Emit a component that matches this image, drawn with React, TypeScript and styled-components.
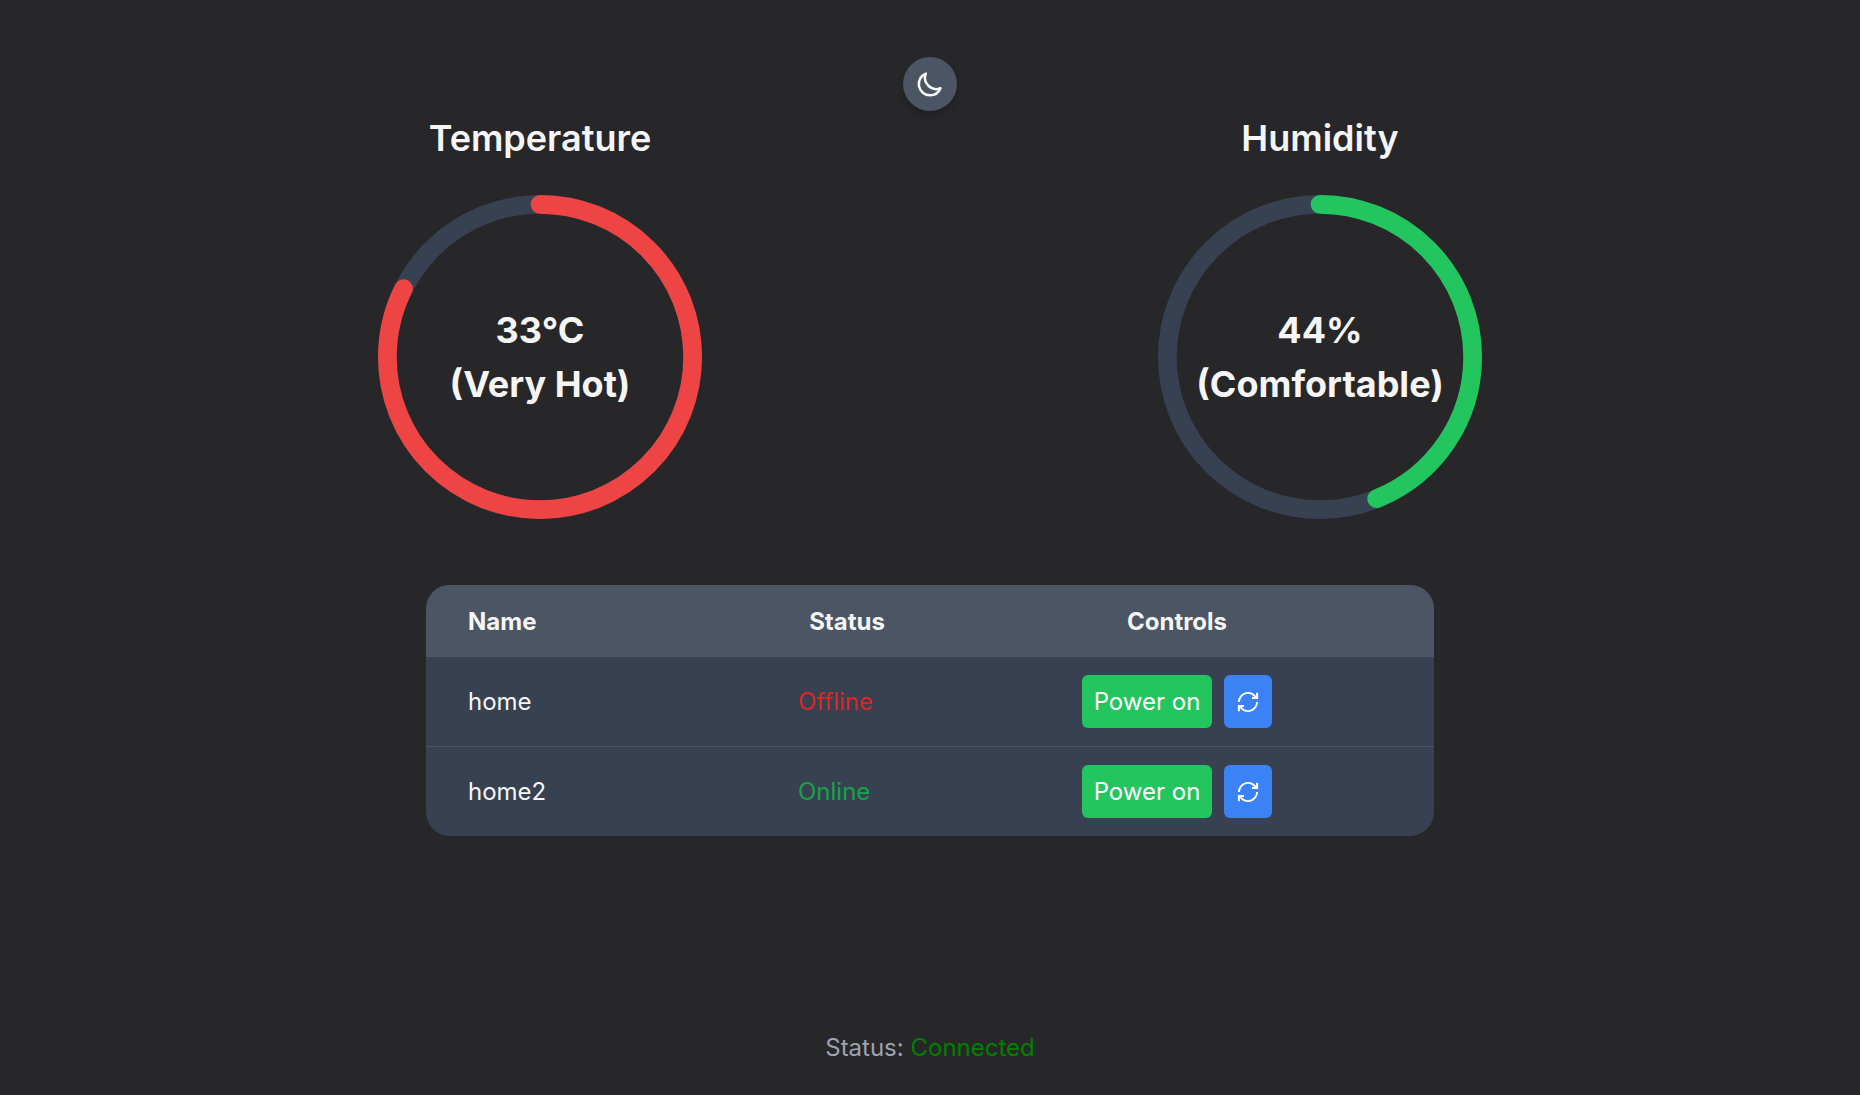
import React, { useState } from "react";
import styled, { createGlobalStyle } from "styled-components";
import { IoSunnyOutline } from "react-icons/io5";

const GlobalStyle = createGlobalStyle<{ $dark: boolean }>`
  *, *::before, *::after { box-sizing: border-box; }
  body {
    margin: 0;
    background: ${(p) => (p.$dark ? "#27272a" : "#f5f5f5")};
    color: ${(p) => (p.$dark ? "#f5f5f5" : "#27272a")};
    font-family: Inter, "Liberation Sans", sans-serif;
    font-size: 24px;
    line-height: 36px;
  }
`;

const Page = styled.div`
  min-height: 100vh;
  display: flex;
  flex-direction: column;
  align-items: center;
  padding: 57px 24px 29px;
`;

const ThemeToggle = styled.button`
  display: flex;
  align-items: center;
  justify-content: center;
  width: 54px;
  height: 54px;
  padding: 0;
  border: 0;
  border-radius: 50%;
  background: #4b5563;
  color: #ffffff;
  font-size: 30px;
  cursor: pointer;
  box-shadow: 0 4px 6px rgba(0, 0, 0, 0.2);
`;

const Gauges = styled.main`
  display: grid;
  grid-template-columns: 1fr 1fr;
  width: 100%;
  max-width: 1560px;
`;

const GaugeCard = styled.section`
  display: flex;
  flex-direction: column;
  align-items: center;
  gap: 30px;
`;

const GaugeTitle = styled.h2`
  margin: 0;
  font-size: 36px;
  line-height: 54px;
  font-weight: 600;
`;

const Dial = styled.div`
  display: grid;
  place-items: center;
  > * { grid-area: 1 / 1; }
`;

const Ring = styled.svg`
  display: block;
  width: 324px;
  height: 324px;
  transform: rotate(-90deg);
  circle {
    fill: none;
    stroke-width: 6;
  }
`;

const Reading = styled.p`
  margin: 0;
  display: flex;
  flex-direction: column;
  align-items: center;
  font-size: 36px;
  line-height: 54px;
  font-weight: 700;
`;

const DeviceTable = styled.table`
  width: 100%;
  max-width: 1008px;
  margin-top: 66px;
  table-layout: fixed;
  border-collapse: separate;
  border-spacing: 0;
  border-radius: 24px;
  overflow: hidden;
  background: #374151;
  color: #f5f5f5;
`;

const Column = styled.col<{ $width?: number }>`
  width: ${(p) => (p.$width ? `${p.$width}px` : "auto")};
`;

const HeadCell = styled.th<{ $align?: "left" | "center"; $controls?: boolean }>`
  padding: ${(p) => (p.$controls ? "19px 42px 17px 24px" : "19px 42px 17px")};
  background: #4b5563;
  font-weight: 700;
  text-align: ${(p) => p.$align ?? "center"};
`;

const Row = styled.tr`
  &:not(:last-child) > td { border-bottom: 1px solid #4b5563; }
`;

const Cell = styled.td<{ $color?: string }>`
  padding: 18px 42px;
  color: ${(p) => p.$color ?? "inherit"};
`;

const ControlsCell = styled.td`
  padding: 18px 42px 18px 24px;
`;

const Controls = styled.div`
  display: flex;
  justify-content: center;
  gap: 12px;
`;

const ActionButton = styled.button<{ $color: string }>`
  display: flex;
  align-items: center;
  padding: 9px 12px;
  border: 0;
  border-radius: 6px;
  background: ${(p) => p.$color};
  color: #ffffff;
  font: inherit;
  line-height: 35px;
  cursor: pointer;
`;

const Footer = styled.footer`
  margin-top: auto;
  color: #9ca3af;
`;

const Connection = styled.span`
  color: #008000;
`;

function MoonIcon() {
  return (
    <svg width="30" height="30" viewBox="0 0 24 24" fill="none" stroke="currentColor" strokeWidth="2" strokeLinejoin="round" aria-hidden="true">
      <path d="M20.354 15.354A9 9 0 018.646 3.646 9.003 9.003 0 0012 21a9.003 9.003 0 008.354-5.646z" />
    </svg>
  );
}

function RefreshIcon() {
  return (
    <svg width="24" height="24" viewBox="0 0 24 24" fill="none" stroke="currentColor" aria-hidden="true">
      <path d="M2.9 12a9.1 9.1 0 0 1 17.4-3.7M21.1 12a9.1 9.1 0 0 1-17.4 3.7" strokeWidth="1.9" />
      <path d="M21.1 2.7v5.3H16M2.9 21.3v-5.3H8" strokeWidth="2.1" />
    </svg>
  );
}

interface GaugeProps {
  title: string;
  value: string;
  label: string;
  percent: number;
  color: string;
  track: string;
}

function Gauge({ title, value, label, percent, color, track }: GaugeProps) {
  return (
    <GaugeCard>
      <GaugeTitle>{title}</GaugeTitle>
      <Dial>
        <Ring viewBox="0 0 104 104" aria-hidden="true">
          <circle cx="52" cy="52" r="49" stroke={track} />
          <circle
            cx="52"
            cy="52"
            r="49"
            stroke={color}
            strokeLinecap="round"
            pathLength={100}
            strokeDasharray={`${percent} 100`}
          />
        </Ring>
        <Reading>
          <span>{value}</span>
          <span>({label})</span>
        </Reading>
      </Dial>
    </GaugeCard>
  );
}

const devices = [
  { name: "home", online: false },
  { name: "home2", online: true },
];

export default function App() {
  const [dark, setDark] = useState(true);
  const track = dark ? "#374151" : "#d1d5db";

  return (
    <Page>
      <GlobalStyle $dark={dark} />
      <ThemeToggle type="button" aria-label="Toggle theme" onClick={() => setDark(!dark)}>
        {dark ? <MoonIcon /> : <IoSunnyOutline />}
      </ThemeToggle>
      <Gauges>
        <Gauge title="Temperature" value="33°C" label="Very Hot" percent={82.5} color="#ef4444" track={track} />
        <Gauge title="Humidity" value="44%" label="Comfortable" percent={44} color="#22c55e" track={track} />
      </Gauges>
      <DeviceTable>
        <colgroup>
          <Column $width={330} />
          <Column $width={182} />
          <Column />
        </colgroup>
        <thead>
          <tr>
            <HeadCell scope="col" $align="left">Name</HeadCell>
            <HeadCell scope="col">Status</HeadCell>
            <HeadCell scope="col" $controls>Controls</HeadCell>
          </tr>
        </thead>
        <tbody>
          {devices.map((device) => (
            <Row key={device.name}>
              <Cell>{device.name}</Cell>
              <Cell $color={device.online ? "#16a34a" : "#dc2626"}>{device.online ? "Online" : "Offline"}</Cell>
              <ControlsCell>
                <Controls>
                  <ActionButton type="button" $color="#22c55e">Power on</ActionButton>
                  <ActionButton type="button" $color="#3b82f6" aria-label={`Refresh ${device.name}`}>
                    <RefreshIcon />
                  </ActionButton>
                </Controls>
              </ControlsCell>
            </Row>
          ))}
        </tbody>
      </DeviceTable>
      <Footer>
        Status: <Connection>Connected</Connection>
      </Footer>
    </Page>
  );
}
